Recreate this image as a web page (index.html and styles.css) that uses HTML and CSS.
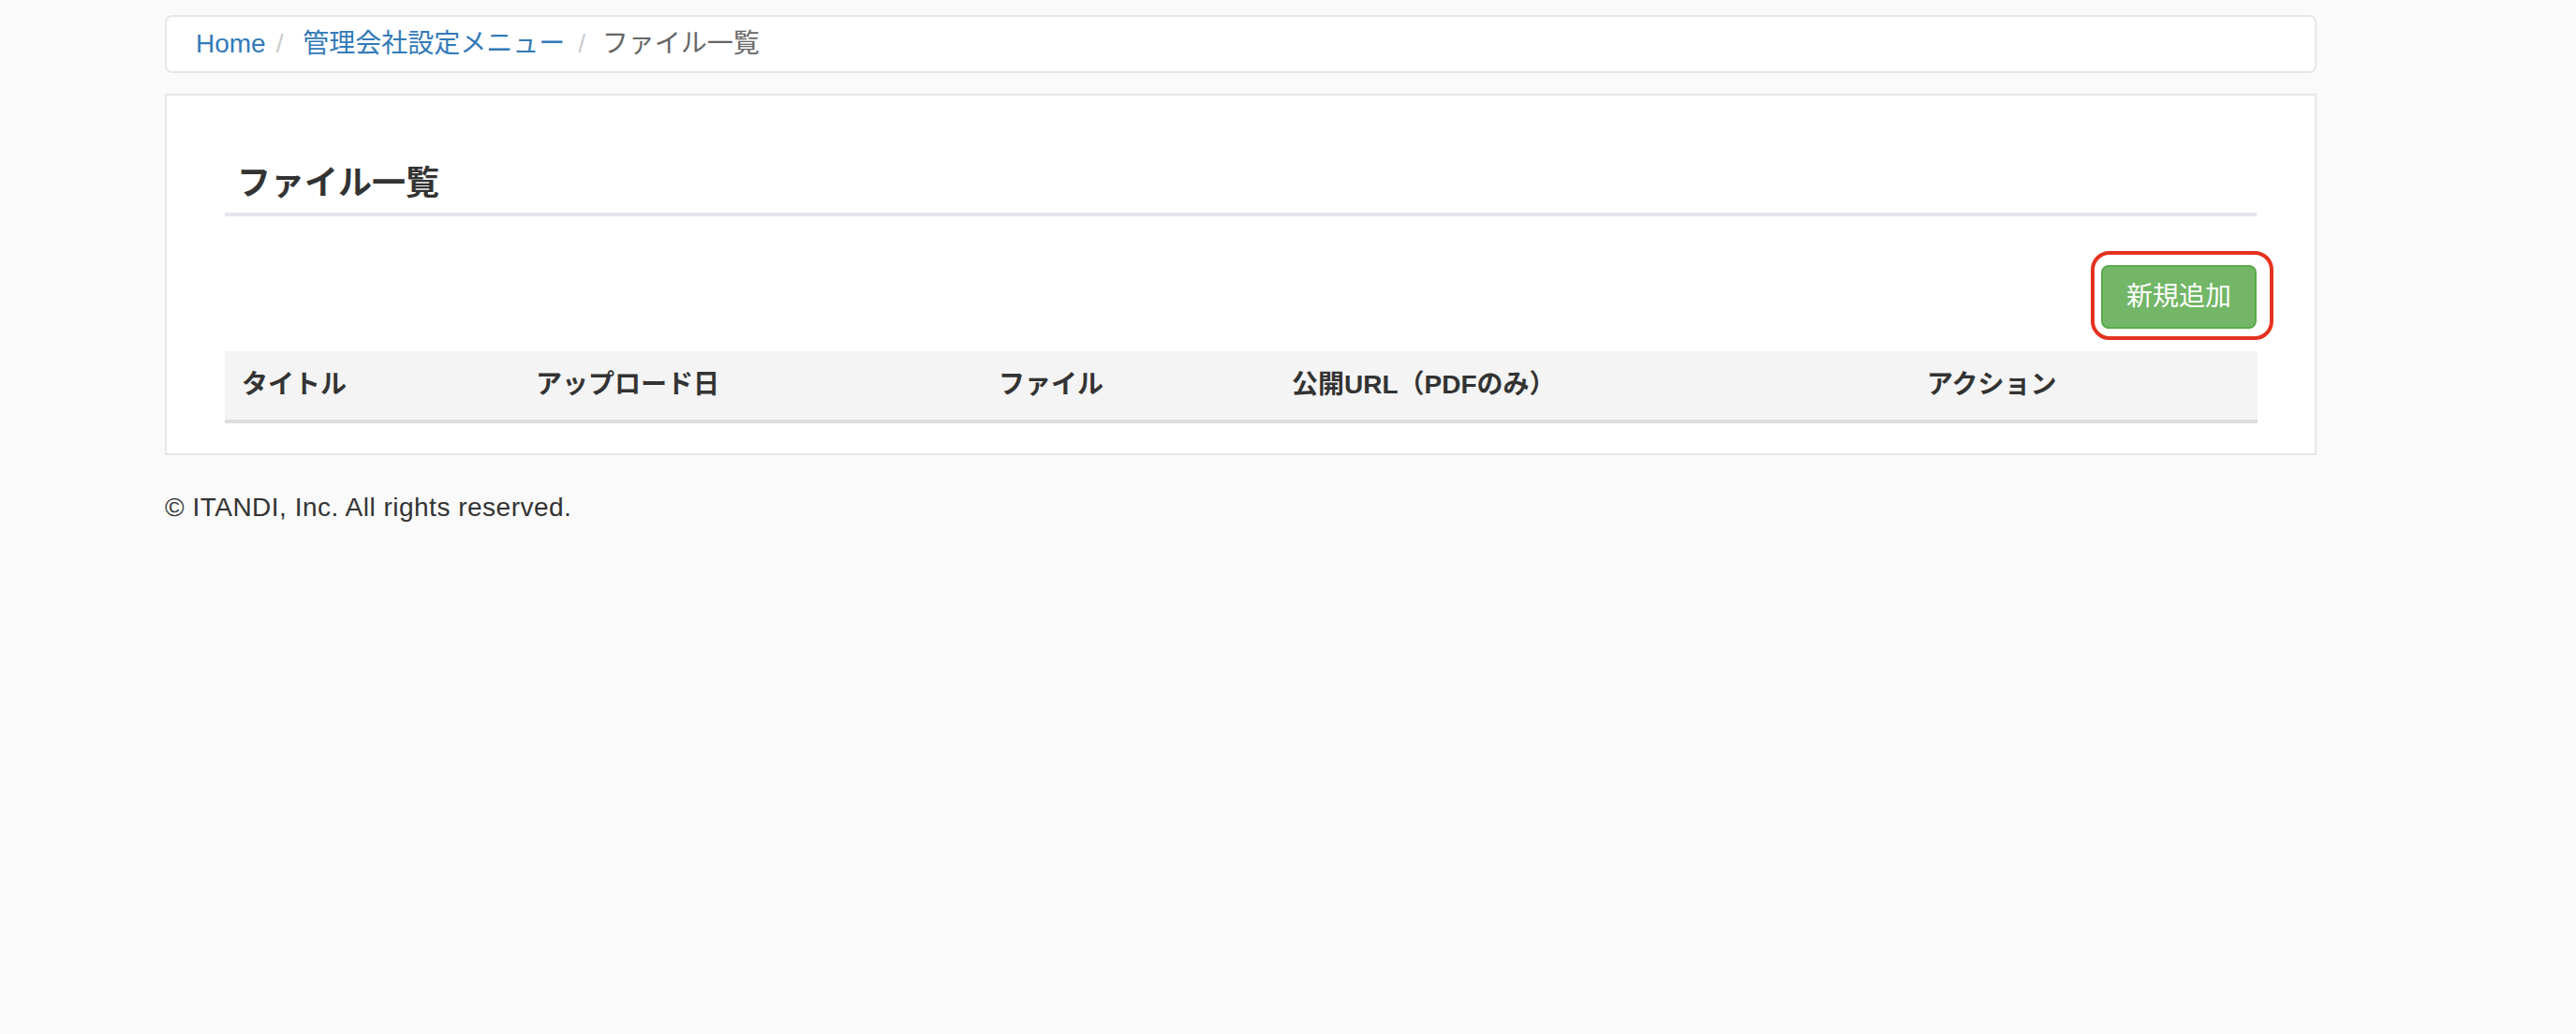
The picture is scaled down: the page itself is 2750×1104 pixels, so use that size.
FILE: index.html
```html
<!DOCTYPE html>
<html lang="ja">
<head>
    <meta charset="UTF-8">
    <meta name="viewport" content="width=device-width, initial-scale=1.0">
    <title>ファイル一覧</title>
    <link rel="stylesheet" href="styles.css">
</head>
<body>
    <div class="container">
        <ol class="breadcrumb">
            <li><a href="#">Home</a></li>
            <li><a href="#">管理会社設定メニュー</a></li>
            <li class="active">ファイル一覧</li>
        </ol>

        <div class="panel">
            <h2 class="panel-title">ファイル一覧</h2>

            <div class="actions">
                <span class="highlight-wrap">
                    <a href="#" class="btn btn-success">新規追加</a>
                    <span class="highlight"></span>
                </span>
            </div>

            <table class="table">
                <thead>
                    <tr>
                        <th class="col-title">タイトル</th>
                        <th class="col-date">アップロード日</th>
                        <th class="col-file">ファイル</th>
                        <th class="col-url">公開URL（PDFのみ）</th>
                        <th class="col-action">アクション</th>
                    </tr>
                </thead>
                <tbody></tbody>
            </table>
        </div>

        <footer class="footer">© ITANDI, Inc. All rights reserved.</footer>
    </div>
</body>
</html>
```

FILE: styles.css
```css
body {
    margin: 0;
    background: #fafafa;
    font-family: "Liberation Sans", "Noto Sans CJK JP", sans-serif;
    font-size: 28px;
    line-height: 40px;
    color: #333;
}
a {
    color: #337ab7;
    text-decoration: none;
}
.container {
    width: 2297px;
    margin-left: 176px;
    padding-top: 16px;
}
.breadcrumb {
    display: flex;
    list-style: none;
    margin: 0 0 22px;
    padding: 9px 31px;
    background: white;
    border: 2px solid #e6e6eb;
    border-radius: 8px;
}
.breadcrumb li + li:before {
    content: "/\00a0";
    padding: 0 10px 0 11px;
    color: #ccc;
}
.breadcrumb li + li a,
.breadcrumb li + li.active {
    margin-left: 3px;
}
.breadcrumb .active {
    color: #666;
}
.panel {
    background: white;
    border: 2px solid #e6e6eb;
    padding: 0 62px 32px;
}
.panel-title {
    margin: 74px 0 0;
    padding: 0 13px 11px;
    font-size: 36px;
    line-height: 40px;
    font-weight: bold;
    color: #333;
    border-bottom: 4px solid #e5e5ea;
}
.actions {
    display: flex;
    justify-content: flex-end;
    margin-top: 52px;
}
.highlight-wrap {
    position: relative;
    display: inline-block;
}
.btn {
    display: inline-block;
    padding: 12px 25px;
    font-size: 28px;
    line-height: 40px;
    border: 2px solid transparent;
    border-radius: 8px;
}
.btn-success {
    color: white;
    background: #73b667;
    border-color: #5aab4c;
}
/* 注釈の赤枠 */
.highlight {
    position: absolute;
    top: -15px;
    left: -11px;
    right: -18px;
    bottom: -12px;
    border: 4px solid #e5321f;
    border-radius: 20px;
    pointer-events: none;
}
.table {
    width: 100%;
    margin-top: 24px;
    border-collapse: collapse;
    table-layout: fixed;
}
.table th {
    box-sizing: border-box;
    text-align: left;
    padding: 16px 18px 17px;
    background: #f4f4f4;
    border-bottom: 4px solid #dddddd;
    font-weight: bold;
    color: #333;
}
.col-title { width: 314px; }
.col-date { width: 494px; }
.col-file { width: 313px; }
.col-url { width: 678px; }
.col-action { width: 371px; }
.footer {
    margin-top: 36px;
    letter-spacing: 0.5px;
}
```
